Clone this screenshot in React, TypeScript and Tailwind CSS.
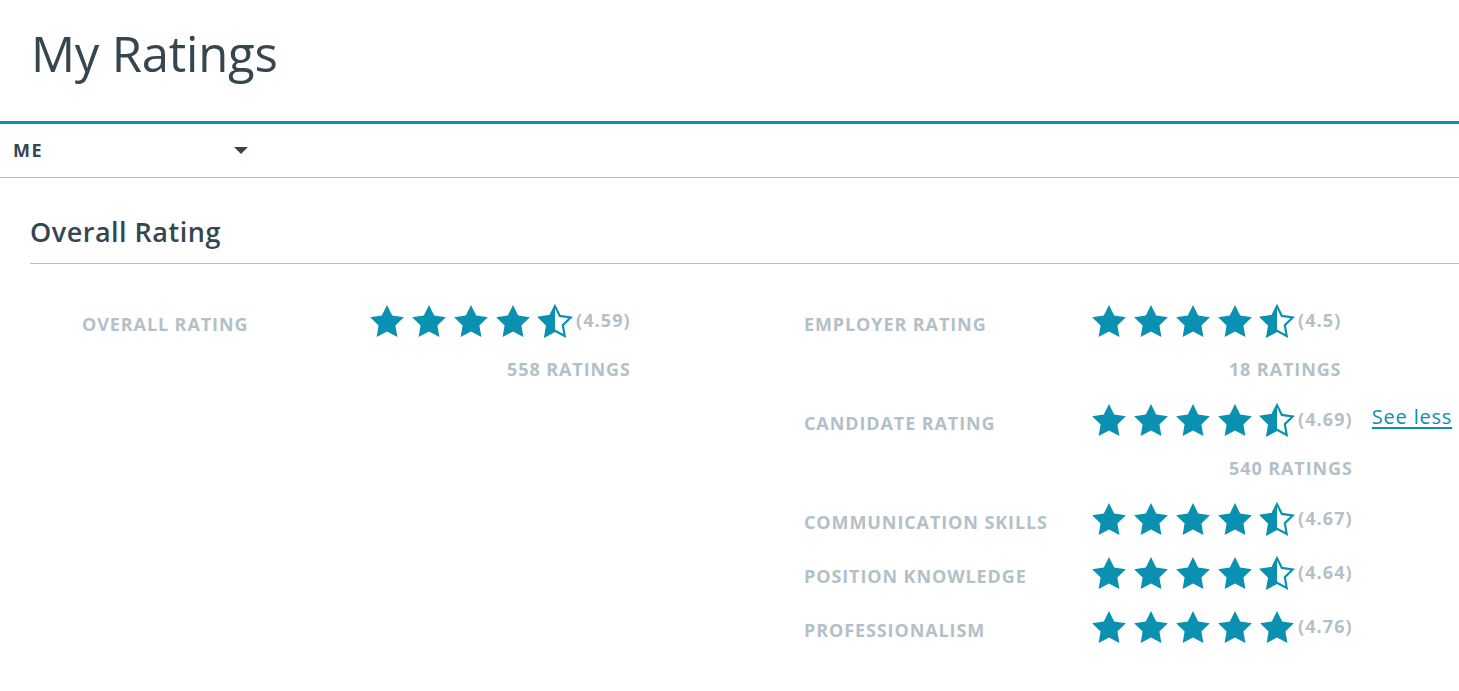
import React from "react";

const TEAL = "#0a90b0";
const STAR_D =
  "M12 2l3.09 6.26L22 9.27l-5 4.87 1.18 6.88L12 17.77l-6.18 3.25L7 14.14 2 9.27l6.91-1.01L12 2z";

function Star({ kind, id }: { kind: "full" | "half"; id: string }) {
  if (kind === "full") {
    return (
      <svg width="34" height="32" viewBox="2 2 20 19.02" className="shrink-0">
        <path d={STAR_D} fill={TEAL} />
      </svg>
    );
  }
  return (
    <svg width="34" height="32" viewBox="2 2 20 19.02" className="shrink-0" overflow="visible">
      <defs>
        <clipPath id={id}>
          <rect x="0" y="0" width="12" height="24" />
        </clipPath>
      </defs>
      <path d={STAR_D} fill={TEAL} clipPath={`url(#${id})`} />
      <path
        d={STAR_D}
        fill="none"
        stroke={TEAL}
        strokeWidth="1.4"
        strokeLinejoin="miter"
        transform="translate(12 11.6) scale(0.93) translate(-12 -11.6)"
      />
    </svg>
  );
}

function Stars({ half, score, uid }: { half: boolean; score: string; uid: string }) {
  return (
    <div className="flex h-[34px] items-center">
      <div className="flex gap-[8px]">
        <Star kind="full" id={uid + "a"} />
        <Star kind="full" id={uid + "b"} />
        <Star kind="full" id={uid + "c"} />
        <Star kind="full" id={uid + "d"} />
        <Star kind={half ? "half" : "full"} id={uid + "e"} />
      </div>
      <span className="ml-[4px] -mt-[3px] text-[18px] font-bold leading-none tracking-[1.1px] text-[#b3c0c7]">
        {score}
      </span>
    </div>
  );
}

type Row = {
  label: string;
  score: string;
  half: boolean;
  count?: string;
  seeLess?: boolean;
};

function RatingRow({ row, uid }: { row: Row; uid: string }) {
  return (
    <div className="flex items-start">
      <div className="flex h-[34px] w-[288px] shrink-0 items-center pt-[6px] text-[18px] font-bold tracking-[0.9px] text-[#b3c0c7]">
        {row.label}
      </div>
      <div className="flex flex-col items-end">
        <Stars half={row.half} score={row.score} uid={uid} />
        {row.count && (
          <div className="mt-[21px] mb-[4px] h-[20px] text-[18px] font-bold leading-[20px] tracking-[0.9px] text-[#b3c0c7]">
            {row.count}
          </div>
        )}
      </div>
      {row.seeLess && (
        <a
          href="#"
          className="ml-[19px] -mt-[3px] flex h-[34px] items-center text-[20px] tracking-[0.8px] text-[#0a90b0] underline decoration-[1.5px] underline-offset-[3px]"
        >
          See less
        </a>
      )}
    </div>
  );
}

export default function App() {
  const left: Row[] = [
    { label: "OVERALL RATING", score: "(4.59)", half: true, count: "558 RATINGS" },
  ];
  const right: Row[] = [
    { label: "EMPLOYER RATING", score: "(4.5)", half: true, count: "18 RATINGS" },
    { label: "CANDIDATE RATING", score: "(4.69)", half: true, count: "540 RATINGS", seeLess: true },
    { label: "COMMUNICATION SKILLS", score: "(4.67)", half: true },
    { label: "POSITION KNOWLEDGE", score: "(4.64)", half: true },
    { label: "PROFESSIONALISM", score: "(4.76)", half: false },
  ];
  return (
    <div
      className="min-h-[691px] w-full bg-white text-[#36464f]"
      style={{ fontFamily: "'Open Sans', Lato, sans-serif" }}
    >
      <div className="flex h-[121px] items-center pl-[31px] pb-[14px]">
        <h1 className="text-[49px] font-normal leading-none tracking-[-0.2px] text-[#36464f]">My Ratings</h1>
      </div>
      <div className="border-t-[3px] border-[#0a90b0]">
        <div className="flex h-[54px] items-center border-b border-[#b3c0c7] pl-[13px]">
          <span className="w-[221px] text-[18px] font-bold tracking-[1.5px] text-[#36464f]">ME</span>
          <svg width="14" height="7" viewBox="0 0 14 7">
            <path d="M0 0h14L7 7z" fill="#36464f" />
          </svg>
        </div>
      </div>
      <div className="pl-[30px]">
        <div className="flex h-[86px] items-end border-b border-[#b3c0c7] pb-[18px]">
          <h2 className="text-[27px] font-semibold leading-[26px] tracking-[0.5px] text-[#36464f]">
            Overall Rating
          </h2>
        </div>
        <div className="flex pl-[52px] pt-[40px]">
          <div className="flex w-[722px] shrink-0 flex-col gap-[20px]">
            {left.map((r, i) => (
              <RatingRow key={r.label} row={r} uid={"l" + i} />
            ))}
          </div>
          <div className="flex flex-col gap-[20px]">
            {right.map((r, i) => (
              <RatingRow key={r.label} row={r} uid={"r" + i} />
            ))}
          </div>
        </div>
      </div>
    </div>
  );
}
